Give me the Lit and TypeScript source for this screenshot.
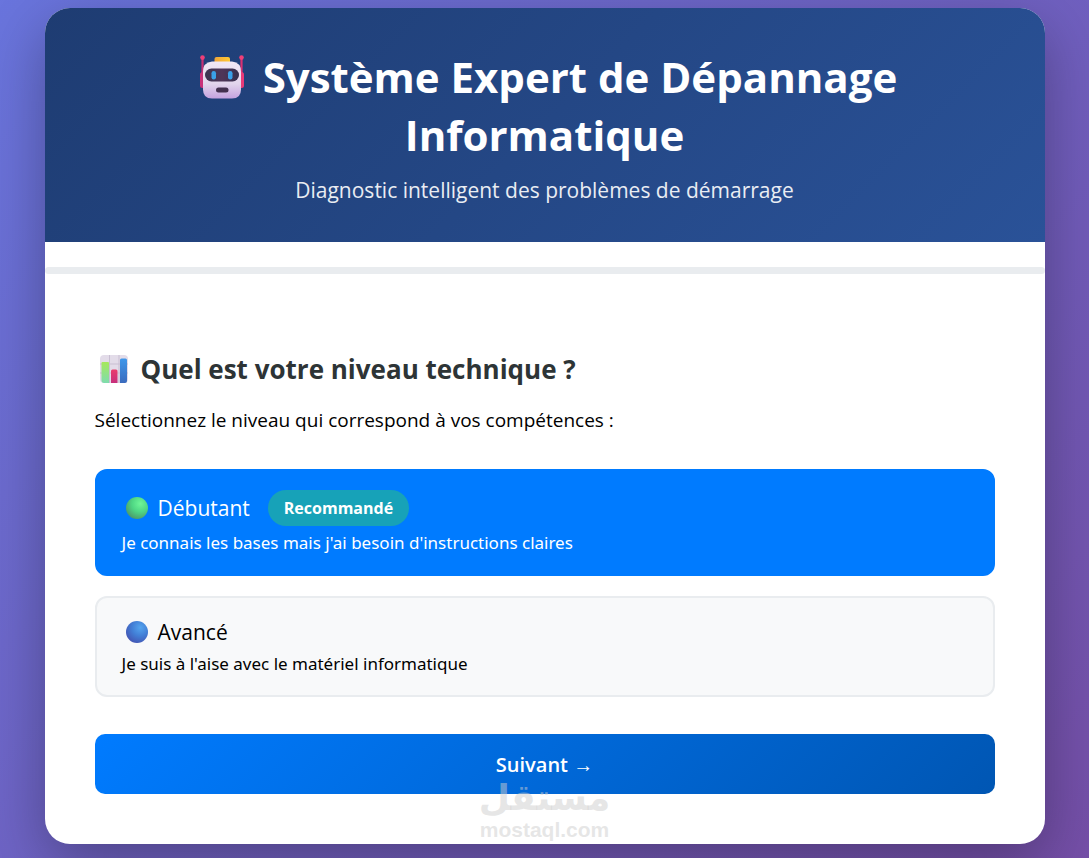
import { LitElement, html, css, svg } from "lit";
import { customElement, state } from "lit/decorators.js";
import { classMap } from "lit/directives/class-map.js";

type Level = {
  id: string;
  title: string;
  text: string;
  badge?: string;
  light: string;
  mid: string;
  dark: string;
};

const LEVELS: Level[] = [
  {
    id: "debutant",
    title: "Débutant",
    text: "Je connais les bases mais j'ai besoin d'instructions claires",
    badge: "Recommandé",
    light: "#6ff598",
    mid: "#4fd784",
    dark: "#4c9a6a",
  },
  {
    id: "avance",
    title: "Avancé",
    text: "Je suis à l'aise avec le matériel informatique",
    light: "#54a4ee",
    mid: "#427fd6",
    dark: "#4356b4",
  },
];

const robotIcon = html`
  <svg class="robot" viewBox="0 0 44 44" aria-hidden="true">
    <defs>
      <linearGradient id="face" x1="0" y1="0" x2="0" y2="1">
        <stop offset="0" stop-color="#f1e8f6" />
        <stop offset="0.6" stop-color="#e2d5ec" />
        <stop offset="1" stop-color="#c5a2df" />
      </linearGradient>
      <linearGradient id="visor" x1="0" y1="0" x2="1" y2="0">
        <stop offset="0" stop-color="#3a3552" />
        <stop offset="0.5" stop-color="#4f3558" />
        <stop offset="1" stop-color="#35304e" />
      </linearGradient>
      <linearGradient id="cap" x1="0" y1="0" x2="1" y2="0">
        <stop offset="0" stop-color="#f0a53a" />
        <stop offset="1" stop-color="#ffc933" />
      </linearGradient>
    </defs>
    <rect x="1.4" y="3" width="2.2" height="18" rx="1" fill="#c62f75" />
    <rect x="40.4" y="3" width="2.2" height="18" rx="1" fill="#d93173" />
    <circle cx="2.5" cy="2.6" r="2.3" fill="#ef3f78" />
    <circle cx="41.5" cy="2.6" r="2.3" fill="#ef3f78" />
    <rect x="0" y="17" width="7" height="16" rx="2.5" fill="#c8307a" />
    <rect x="37" y="17" width="7" height="16" rx="2.5" fill="#e83a78" />
    <rect x="14.5" y="2" width="15.5" height="8" rx="2" fill="url(#cap)" />
    <path
      d="M12 6.5h20q9 1 9 10v18q0 9-9 9H12q-9 0-9-9v-18q0-9 9-10z"
      fill="url(#face)"
    />
    <rect x="5" y="13.5" width="34" height="13" rx="6.5" fill="url(#visor)" />
    <rect x="11.5" y="16" width="4.5" height="8.5" rx="2.2" fill="#3aa0e8" />
    <rect x="28" y="16" width="4.5" height="8.5" rx="2.2" fill="#3aa0e8" />
    <rect x="16" y="32.5" width="12.5" height="5" rx="2.5" fill="#43304f" />
  </svg>
`;

const chartIcon = html`
  <svg class="chart" viewBox="0 0 28 28" aria-hidden="true">
    <defs>
      <linearGradient id="green" x1="0" y1="0" x2="0" y2="1">
        <stop offset="0" stop-color="#a6e85c" />
        <stop offset="1" stop-color="#7fdcae" />
      </linearGradient>
      <linearGradient id="red" x1="0" y1="0" x2="0" y2="1">
        <stop offset="0" stop-color="#ea3c6c" />
        <stop offset="1" stop-color="#c62f7c" />
      </linearGradient>
      <linearGradient id="blue" x1="0" y1="0" x2="0" y2="1">
        <stop offset="0" stop-color="#3f97ea" />
        <stop offset="1" stop-color="#3b6bbd" />
      </linearGradient>
    </defs>
    <rect width="28" height="28" rx="4" fill="#e3dce9" />
    <path d="M0 9H28M0 18H28M9.5 0V28M19 0V28" stroke="#c9bfd2" fill="none" />
    <path d="M1.5 8q0-1 1-1H8q1 0 1 1V28H4q-2.5 0-2.5-3z" fill="url(#green)" />
    <path d="M11 16q0-1.5 1.5-1.5h3.500q1.5 0 1.5 1.5V28H11z" fill="url(#red)" />
    <path d="M20 5q0-1.5 1.5-1.5h4q1.5 0 1.5 1.5V26q0 2-2 2H20z" fill="url(#blue)" />
  </svg>
`;

const ballIcon = (level: Level) => html`
  <svg class="ball" viewBox="0 0 22 22" aria-hidden="true">
    <defs>
      <radialGradient id=${"ball-" + level.id} cx="0.65" cy="0.3" r="0.75">
        <stop offset="0" stop-color=${level.light} />
        <stop offset="0.5" stop-color=${level.mid} />
        <stop offset="1" stop-color=${level.dark} />
      </radialGradient>
    </defs>
    ${svg`<circle cx="11" cy="11" r="11" fill=${"url(#ball-" + level.id + ")"} />`}
  </svg>
`;

@customElement("app-root")
export class AppRoot extends LitElement {
  @state() private selected = "debutant";

  static styles = css`
    :host {
      display: block;
      box-sizing: border-box;
      min-height: 100vh;
      padding: 8px 20px 14px;
      background: linear-gradient(135deg, #667eea -25%, #764ba2 110%);
      font-family: "Open Sans", "Noto Sans", sans-serif;
      color: #000;
    }
    * {
      box-sizing: border-box;
    }
    h1,
    h2,
    p {
      margin: 0;
    }
    .card {
      position: relative;
      max-width: 1000px;
      margin: 0 auto;
      background: #fff;
      border-radius: 25px;
      overflow: hidden;
      box-shadow: 0 20px 60px rgba(0, 0, 0, 0.3);
    }
    .header {
      padding: 40px;
      background: linear-gradient(135deg, #1e3c72 0%, #2a5298 100%);
      color: #fff;
      text-align: center;
    }
    .header h1 {
      font-size: 42px;
      line-height: 58px;
      font-weight: 700;
    }
    .robot {
      width: 44px;
      height: 44px;
      margin: 0 8px;
      vertical-align: -6px;
    }
    .subtitle {
      margin-top: 14px;
      font-size: 21px;
      line-height: 24px;
      opacity: 0.9;
    }
    .progress {
      height: 7px;
      margin-top: 25px;
      border-radius: 4px;
      background: #e9ecef;
    }
    .content {
      display: flex;
      flex-direction: column;
      padding: 76px 50px 50px;
    }
    .content h2 {
      display: flex;
      align-items: center;
      gap: 13px;
      padding-left: 5px;
      font-size: 26px;
      line-height: 38px;
      font-weight: 700;
      color: #2d3436;
    }
    .chart {
      width: 28px;
      height: 28px;
      flex: none;
    }
    .intro {
      margin-top: 19px;
      font-size: 19px;
      line-height: 26px;
    }
    .levels {
      display: flex;
      flex-direction: column;
      gap: 20px;
      margin: 36px 0 0;
      padding: 0;
      border: 0;
    }
    .level {
      display: flex;
      flex-direction: column;
      gap: 5px;
      padding: 19px 25px;
      border: 2px solid #e9ecef;
      border-radius: 12px;
      background: #f8f9fa;
      cursor: pointer;
    }
    .level.selected {
      border-color: #007bff;
      background: #007bff;
      color: #fff;
    }
    .level:focus-within:has(:focus-visible) {
      outline: 2px solid #0056b3;
    }
    .radio {
      position: absolute;
      opacity: 0;
      margin: 0;
      pointer-events: none;
    }
    .level-head {
      display: flex;
      align-items: center;
      min-height: 30px;
      padding-left: 4px;
      font-size: 21px;
      line-height: 30px;
    }
    .ball {
      width: 22px;
      height: 22px;
      margin-right: 10px;
    }
    .badge {
      margin-left: 18px;
      padding: 0 16px;
      border-radius: 18px;
      background: #17a2b8;
      color: #fff;
      font-size: 16px;
      line-height: 36px;
      font-weight: 700;
    }
    .level-text {
      font-family: "Noto Sans", "Open Sans", sans-serif;
      font-size: 17px;
      line-height: 24px;
    }
    .next {
      height: 60px;
      margin-top: 37px;
      border: 0;
      border-radius: 10px;
      background: linear-gradient(135deg, #007bff 0%, #0056b3 100%);
      color: #fff;
      font-family: inherit;
      font-size: 20px;
      font-weight: 600;
      cursor: pointer;
    }
    .watermark {
      position: absolute;
      left: 0;
      right: 0;
      bottom: 2px;
      display: flex;
      flex-direction: column;
      align-items: center;
      color: rgba(205, 205, 205, 0.5);
      font-weight: 700;
      pointer-events: none;
    }
    .watermark-ar {
      font-family: "DejaVu Sans", sans-serif;
      font-size: 36px;
      line-height: 40px;
    }
    .watermark-url {
      font-family: "Liberation Sans", sans-serif;
      font-size: 21px;
      line-height: 24px;
    }
  `;

  private renderLevel(level: Level) {
    const selected = this.selected === level.id;
    return html`
      <label class=${classMap({ level: true, selected })}>
        <input
          class="radio"
          type="radio"
          name="level"
          .value=${level.id}
          .checked=${selected}
          @change=${() => (this.selected = level.id)}
        />
        <span class="level-head">
          ${ballIcon(level)}
          <span>${level.title}</span>
          ${level.badge ? html`<span class="badge">${level.badge}</span>` : ""}
        </span>
        <span class="level-text">${level.text}</span>
      </label>
    `;
  }

  render() {
    return html`
      <main class="card">
        <header class="header">
          <h1>${robotIcon} Système Expert de Dépannage Informatique</h1>
          <p class="subtitle">Diagnostic intelligent des problèmes de démarrage</p>
        </header>
        <div class="progress" role="progressbar" aria-valuenow="0" aria-label="Progression"></div>
        <section class="content">
          <h2>${chartIcon}<span>Quel est votre niveau technique ?</span></h2>
          <p class="intro">Sélectionnez le niveau qui correspond à vos compétences :</p>
          <fieldset class="levels" aria-label="Niveau technique">
            ${LEVELS.map((level) => this.renderLevel(level))}
          </fieldset>
          <button class="next" type="button">Suivant →</button>
        </section>
        <div class="watermark">
          <span class="watermark-ar" lang="ar" dir="rtl">مستقل</span>
          <span class="watermark-url">mostaql.com</span>
        </div>
      </main>
    `;
  }
}
